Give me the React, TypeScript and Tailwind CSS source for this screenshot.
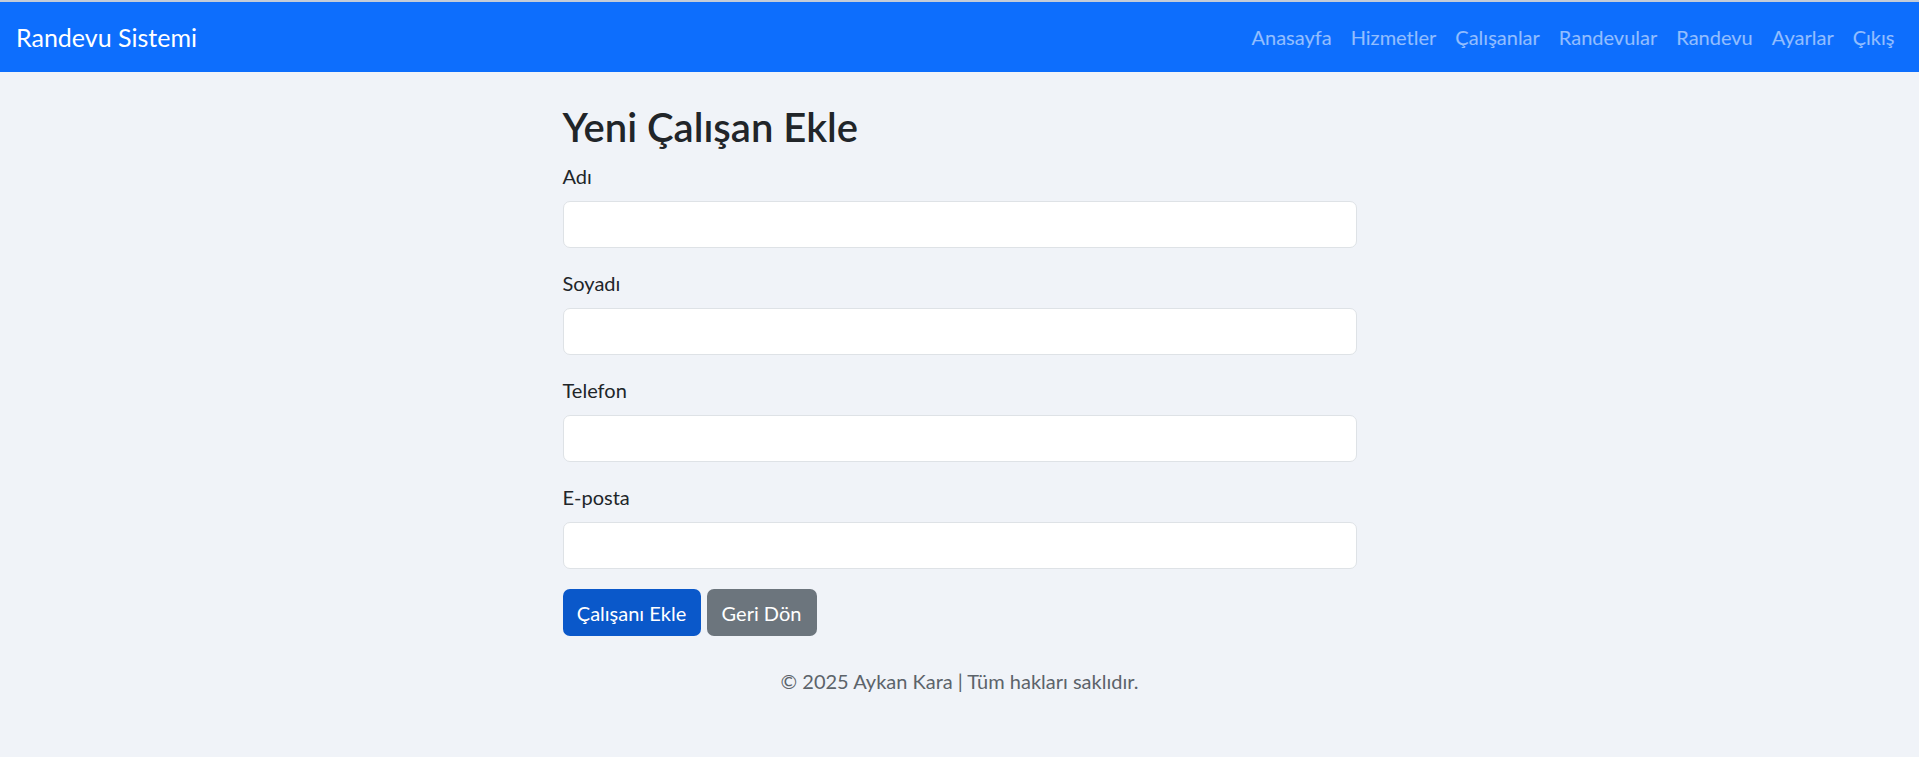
import React from 'react';

const navLinks = ['Anasayfa', 'Hizmetler', 'Çalışanlar', 'Randevular', 'Randevu', 'Ayarlar', 'Çıkış'];

const fields = [
  { id: 'ad', label: 'Adı', type: 'text' },
  { id: 'soyad', label: 'Soyadı', type: 'text' },
  { id: 'telefon', label: 'Telefon', type: 'tel' },
  { id: 'eposta', label: 'E-posta', type: 'email' },
];

const Navbar: React.FC = () => (
  <nav className="h-[70px] bg-[#0d6efd] flex items-center justify-between px-[15px]">
    <a href="#" className="text-[25px] leading-[30px] text-white pl-px">
      Randevu Sistemi
    </a>
    <ul className="flex items-center">
      {navLinks.map((link) => (
        <li key={link}>
          <a href="#" className="block px-[9.5px] text-[20px] leading-[30px] text-white/55 hover:text-white/75">
            {link}
          </a>
        </li>
      ))}
    </ul>
  </nav>
);

export default function App() {
  return (
    <div
      className="min-h-screen bg-[#f0f3f8] text-[#212529] border-t-2 border-[#c4ccd8]"
      style={{ fontFamily: 'Lato, "Noto Sans", sans-serif' }}
    >
      <Navbar />

      <main className="w-[794px] mx-auto pt-[30px]">
        <h2 className="text-[40px] leading-[48px] font-semibold mb-[10px] pt-px">Yeni Çalışan Ekle</h2>

        <form onSubmit={(e) => e.preventDefault()}>
          {fields.map((f) => (
            <div key={f.id} className="mb-[20px]">
              <label htmlFor={f.id} className="block text-[20px] leading-[30px] mb-[10px]">
                {f.label}
              </label>
              <input
                id={f.id}
                type={f.type}
                className="block w-full h-[47px] px-[15px] bg-white border border-[#dee2e6] rounded-[7px] text-[20px] focus:outline-none focus:border-[#86b7fe]"
              />
            </div>
          ))}

          <div className="flex gap-[6px]">
            <button
              type="submit"
              className="w-[138px] h-[47px] bg-[#0a58ca] text-white text-[20px] rounded-[7px] flex items-center justify-center"
            >
              Çalışanı Ekle
            </button>
            <button
              type="button"
              className="w-[110px] h-[47px] bg-[#6c757d] text-white text-[20px] rounded-[7px] flex items-center justify-center"
            >
              Geri Dön
            </button>
          </div>
        </form>

        <footer className="mt-[30px] text-center text-[20px] leading-[30px] text-[#5c636a]">
          © 2025 Aykan Kara | Tüm hakları saklıdır.
        </footer>
      </main>
    </div>
  );
}
